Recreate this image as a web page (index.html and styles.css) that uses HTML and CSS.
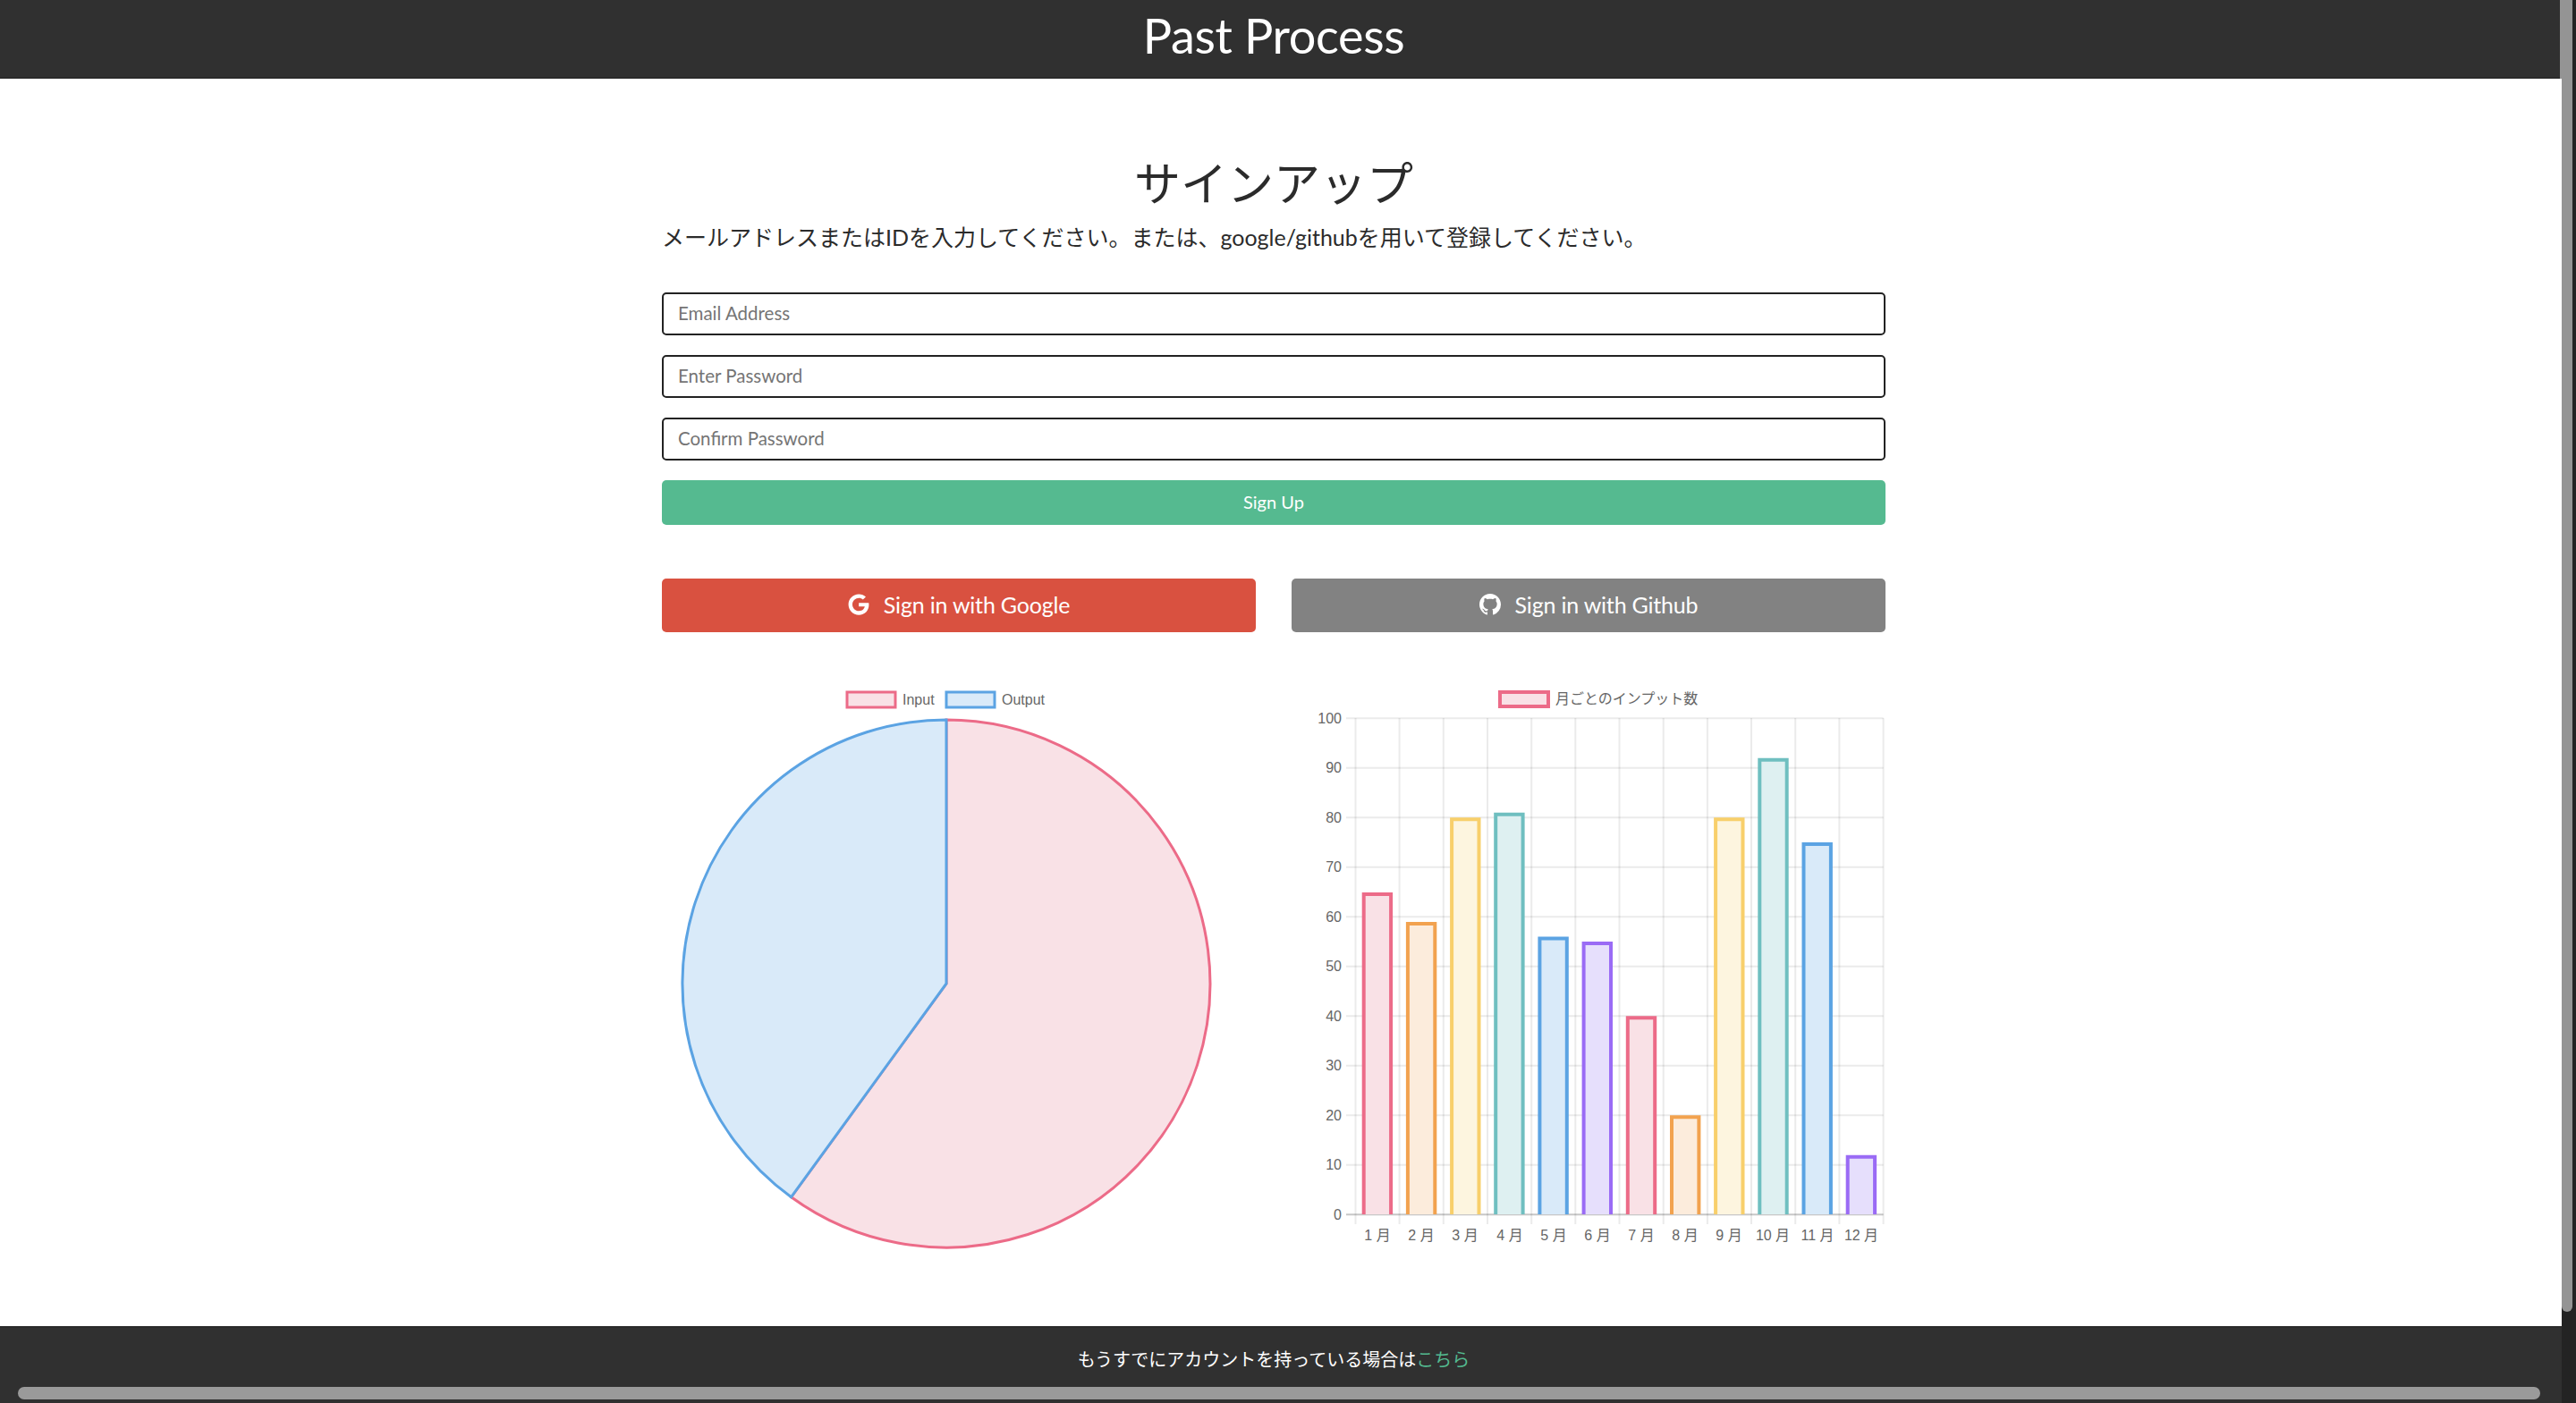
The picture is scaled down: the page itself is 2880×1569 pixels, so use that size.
FILE: index.html
```html
<!DOCTYPE html>
<html lang="ja">
<head>
<meta charset="utf-8">
<title>Past Process</title>
<link rel="stylesheet" href="styles.css">
</head>
<body>
<div class="page">
  <header class="topbar"><span class="brand">Past Process</span></header>
  <main class="content">
    <h1 class="heading">サインアップ</h1>
    <p class="lead">メールアドレスまたはIDを入力してください。または、google/githubを用いて登録してください。</p>
    <form class="form">
      <input class="field" type="text" placeholder="Email Address">
      <input class="field" type="password" placeholder="Enter Password">
      <input class="field" type="password" placeholder="Confirm Password">
      <button class="submit" type="button">Sign Up</button>
    </form>
    <div class="social">
      <a class="social-btn google" href="#">
        <svg class="social-icon" viewBox="0 0 488 512"><path d="M488 261.8C488 403.3 391.1 504 248 504 110.8 504 0 393.2 0 256S110.8 8 248 8c66.8 0 123 24.5 166.3 64.9l-67.5 64.9C258.5 52.6 94.3 116.6 94.3 256c0 86.5 69.1 156.6 153.7 156.6 98.2 0 135-70.4 140.8-106.9H248v-85.3h236.1c2.3 12.7 3.9 24.9 3.9 41.4z"/></svg>
        <span>Sign in with Google</span>
      </a>
      <a class="social-btn github" href="#">
        <svg class="social-icon" viewBox="0 0 16 16"><path d="M8 0C3.58 0 0 3.58 0 8c0 3.54 2.29 6.53 5.47 7.59.4.07.55-.17.55-.38 0-.19-.01-.82-.01-1.49-2.01.37-2.53-.49-2.69-.94-.09-.23-.48-.94-.82-1.13-.28-.15-.68-.52-.01-.53.63-.01 1.08.58 1.23.82.72 1.21 1.87.87 2.33.66.07-.52.28-.87.51-1.07-1.78-.2-3.64-.89-3.64-3.95 0-.87.31-1.59.82-2.15-.08-.2-.36-1.02.08-2.12 0 0 .67-.21 2.2.82.64-.18 1.32-.27 2-.27.68 0 1.36.09 2 .27 1.53-1.04 2.2-.82 2.2-.82.44 1.1.16 1.92.08 2.12.51.56.82 1.27.82 2.15 0 3.07-1.87 3.75-3.65 3.95.29.25.54.73.54 1.48 0 1.07-.01 1.93-.01 2.2 0 .21.15.46.55.38A8.013 8.013 0 0016 8c0-4.42-3.58-8-8-8z"/></svg>
        <span>Sign in with Github</span>
      </a>
    </div>
    <div class="charts">
      <svg class="chart" viewBox="0 0 664 660">
        <rect class="pink" x="207" y="14" width="54" height="17" stroke-width="3"/>
        <text class="legend" x="269" y="27.5">Input</text>
        <rect class="blue" x="318" y="14" width="54" height="17" stroke-width="3"/>
        <text class="legend" x="380" y="27.5">Output</text>
        <path class="pink" stroke-width="3" d="M318 340 L318 45 A295 295 0 1 1 144.6 578.7 Z"/>
        <path class="blue" stroke-width="3" d="M318 340 L144.6 578.7 A295 295 0 0 1 318 45 Z"/>
      </svg>
      <svg class="chart" viewBox="0 0 664 660">
        <rect class="pink" x="233" y="14" width="54" height="16" stroke-width="4"/>
        <text class="legend" x="295" y="27">月ごとのインプット数</text>
        <g class="grid">
          <path d="M71.5 43V609M120.6 43V609M169.8 43V609M219 43V609M268.2 43V609M317.3 43V609M366.5 43V609M415.7 43V609M464.9 43V609M514 43V609M563.2 43V609M612.4 43V609M661.6 43V609"/>
          <path d="M61 43.3H661.6M61 98.8H661.6M61 154.3H661.6M61 209.8H661.6M61 265.3H661.6M61 320.8H661.6M61 376.3H661.6M61 431.8H661.6M61 487.3H661.6M61 542.8H661.6"/>
        </g>
        <path class="axis" d="M61 598.3H661.6"/>
        <g class="bars">
          <path class="pink" d="M80.7 598V240H111.1V598"/>
          <path class="orange" d="M129.9 598V272.9H160.3V598"/>
          <path class="yellow" d="M179.1 598V156.3H209.5V598"/>
          <path class="teal" d="M228.2 598V150.8H258.6V598"/>
          <path class="blue" d="M277.4 598V289.5H307.8V598"/>
          <path class="purple" d="M326.6 598V295H357V598"/>
          <path class="pink" d="M375.8 598V378.3H406.2V598"/>
          <path class="orange" d="M425 598V489.3H455.4V598"/>
          <path class="yellow" d="M474.1 598V156.3H504.5V598"/>
          <path class="teal" d="M523.3 598V89.7H553.7V598"/>
          <path class="blue" d="M572.5 598V184H602.9V598"/>
          <path class="purple" d="M621.7 598V533.7H652.1V598"/>
        </g>
        <g class="ticks-y">
          <text x="56" y="49">100</text><text x="56" y="104">90</text><text x="56" y="160">80</text><text x="56" y="215">70</text><text x="56" y="271">60</text><text x="56" y="326">50</text><text x="56" y="382">40</text><text x="56" y="437">30</text><text x="56" y="493">20</text><text x="56" y="548">10</text><text x="56" y="604">0</text>
        </g>
        <g class="ticks-x">
          <text x="96" y="627">1 月</text><text x="145" y="627">2 月</text><text x="194" y="627">3 月</text><text x="244" y="627">4 月</text><text x="293" y="627">5 月</text><text x="342" y="627">6 月</text><text x="391" y="627">7 月</text><text x="440" y="627">8 月</text><text x="489" y="627">9 月</text><text x="538" y="627">10 月</text><text x="588" y="627">11 月</text><text x="637" y="627">12 月</text>
        </g>
      </svg>
    </div>
  </main>
  <footer class="bottombar">もうすでにアカウントを持っている場合は<a class="bottom-link" href="#">こちら</a></footer>
  <div class="hscroll-thumb"></div>
</div>
<div class="vscroll"><div class="vscroll-thumb"></div></div>
</body>
</html>
```
FILE: styles.css
```css
* { box-sizing: border-box; }
html, body { margin: 0; height: 100%; }
body {
  display: flex;
  height: 100vh;
  overflow: hidden;
  background: #fff;
  color: #2b2b2b;
  font-family: Lato, "Noto Sans CJK JP", sans-serif;
}
.page {
  position: relative;
  flex: 1;
  min-width: 0;
  display: flex;
  flex-direction: column;
}
.topbar {
  height: 88px;
  flex: none;
  padding-right: 16px;
  display: flex;
  justify-content: center;
  align-items: center;
  background: #303030;
  border-bottom: 2px solid #2a2a2a;
}
.brand {
  color: #fff;
  font-size: 54px;
  letter-spacing: -0.35px;
  line-height: 80px;
  margin-top: -6px;
}
.content {
  flex: 1;
  min-height: 0;
  width: 1368px;
  margin-left: 740px;
  padding-top: 86px;
}
.heading {
  margin: 0;
  font-size: 52px;
  line-height: 62px;
  font-weight: 400;
  text-align: center;
}
.lead {
  margin: 11px 0 0;
  font-size: 25px;
  line-height: 36px;
  color: #2b2b2b;
}
.form {
  margin-top: 44px;
  display: flex;
  flex-direction: column;
  gap: 22px;
}
.field {
  height: 48px;
  padding: 0 16px 2px;
  border: 2px solid #222;
  border-radius: 5px;
  outline: none;
  font-family: inherit;
  font-size: 20.5px;
  color: #222;
  background: #fff;
}
.field::placeholder { color: #757575; opacity: 1; }
.submit {
  height: 50px;
  padding: 0 0 2px;
  border: 0;
  border-radius: 5px;
  background: #55ba90;
  color: #fff;
  font-family: inherit;
  font-size: 20px;
}
.social {
  margin-top: 60px;
  display: grid;
  grid-template-columns: 1fr 1fr;
  column-gap: 40px;
}
.social-btn {
  height: 60px;
  padding-bottom: 2px;
  display: flex;
  justify-content: center;
  align-items: center;
  gap: 16px;
  border-radius: 5px;
  color: #fff;
  font-size: 25px;
  letter-spacing: -0.2px;
  text-decoration: none;
}
.google { background: #d95140; }
.github { background: #828282; }
.social-icon { width: 24px; height: 24px; fill: #fff; flex: none; }
.charts {
  margin-top: 53px;
  display: grid;
  grid-template-columns: 1fr 1fr;
  column-gap: 40px;
}
.chart { display: block; width: 664px; height: 660px; }
.legend, .ticks-y text, .ticks-x text {
  font-family: "Liberation Sans", "Noto Sans CJK JP", sans-serif;
  font-size: 16px;
  fill: #666;
}
.ticks-y text { text-anchor: end; }
.ticks-x text { text-anchor: middle; }
.grid path { fill: none; stroke: rgba(0, 0, 0, 0.08); stroke-width: 2; }
.axis { fill: none; stroke: rgba(0, 0, 0, 0.22); stroke-width: 2; }
.bars path { stroke-width: 4; }
.pink { fill: #f9e1e6; stroke: #ec6b88; }
.blue { fill: #d9eaf9; stroke: #5ba3e3; }
.orange { fill: #fcecdc; stroke: #f2a24f; }
.yellow { fill: #fdf5df; stroke: #f8cf6b; }
.teal { fill: #def0f1; stroke: #6fbfc0; }
.purple { fill: #e6dffc; stroke: #9a6bf5; }
.bottombar {
  height: 86px;
  flex: none;
  padding-top: 21px;
  padding-right: 16px;
  text-align: center;
  background: #303030;
  border-top: 2px solid #2a2a2a;
  color: #fff;
  font-size: 20px;
  line-height: 28px;
}
.bottom-link { color: #53b98f; text-decoration: none; }
.hscroll-thumb {
  position: absolute;
  left: 20px;
  bottom: 4px;
  width: 2820px;
  height: 14px;
  border-radius: 7px;
  background: #9a9a9a;
}
.vscroll {
  position: relative;
  flex: none;
  width: 16px;
  background: #232323;
}
.vscroll-thumb {
  width: 12px;
  height: 1467px;
  border-radius: 0 0 6px 6px;
  background: #949494;
}
.vscroll-thumb::before {
  content: "";
  position: absolute;
  left: -2px;
  top: 0;
  width: 2px;
  height: 88px;
  background: #949494;
}
```
